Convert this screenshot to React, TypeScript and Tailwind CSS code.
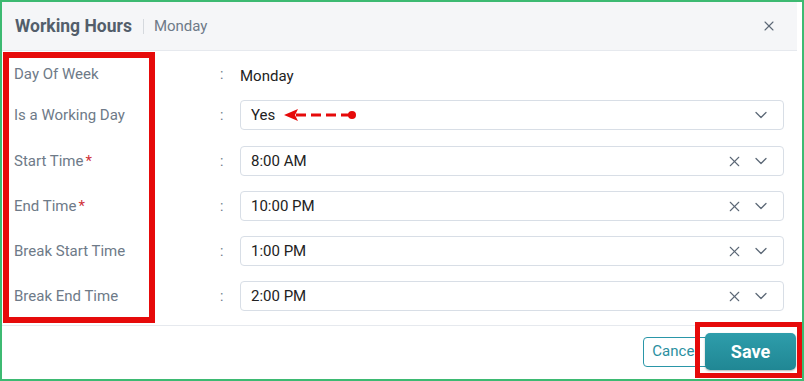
import React from "react";
import { X, ChevronDown } from "lucide-react";

// Rows of the working-hours form
const rows = [
  { label: "Start Time", value: "8:00 AM", required: true, clearable: true },
  { label: "End Time", value: "10:00 PM", required: true, clearable: true },
  { label: "Break Start Time", value: "1:00 PM", required: false, clearable: true },
  { label: "Break End Time", value: "2:00 PM", required: false, clearable: true },
];

const Label = ({ text, required }: { text: string; required?: boolean }) => (
  <div className="w-[218px] pl-[12px] text-[15px] text-[#6e7a88]">
    {text}
    {required && <span className="ml-[2px] text-[#d0333a]">*</span>}
  </div>
);

const Colon = () => <div className="w-[20px] text-[14px] text-[#6e7a88]">:</div>;

const SelectBox = ({
  value,
  clearable,
  children,
}: {
  value: string;
  clearable?: boolean;
  children?: React.ReactNode;
}) => (
  <div className="relative flex h-[30px] w-[544px] items-center rounded-[4px] border border-[#d8dee6] bg-white pl-[10px] pr-[12px]">
    <span className="text-[15px] text-[#222]">{value}</span>
    {children}
    <div className="ml-auto flex items-center gap-[8px] text-[#5c6876]">
      {clearable && <X size={17} strokeWidth={1.5} />}
      <ChevronDown size={20} strokeWidth={1.5} />
    </div>
  </div>
);

const DashedArrow = () => (
  <svg width="76" height="14" viewBox="0 0 76 14" className="absolute left-[43px] top-[7px]">
    <polygon points="0,7 14,1 11,7 14,13" fill="#e60a0a" />
    <line x1="12" y1="7" x2="66" y2="7" stroke="#e60a0a" strokeWidth="3" strokeDasharray="10 5" />
    <circle cx="68" cy="7" r="4" fill="#e60a0a" />
  </svg>
);

export default function App() {
  return (
    <div
      className="relative h-[381px] w-[804px] overflow-hidden border-2 border-[#3dba72] bg-white"
      style={{ fontFamily: "Roboto, 'Liberation Sans', sans-serif" }}
    >
      <div className="w-[795px]">
        {/* header */}
        <div className="flex h-[49px] items-center border-b border-[#e6e9ee] bg-[#f5f6f8] pl-[13px] pr-[20px]">
          <span className="text-[17.5px] font-bold text-[#535e6b]">Working Hours</span>
          <span className="ml-[11px] mr-[10px] h-[15px] w-px bg-[#d5d9de]" />
          <span className="text-[15px] text-[#6e7a88]">Monday</span>
          <X size={16} strokeWidth={1.6} className="ml-auto text-[#5c6876]" />
        </div>

        {/* body */}
        <div className="flex flex-col pt-[10px]">
          <div className="flex h-[27px] items-center">
            <Label text="Day Of Week" />
            <Colon />
            <span className="pt-[3px] text-[15px] text-[#222]">Monday</span>
          </div>
          <div className="mt-[12px] flex items-center">
            <Label text="Is a Working Day" />
            <Colon />
            <SelectBox value="Yes">
              <DashedArrow />
            </SelectBox>
          </div>
          {rows.map((r, i) => (
            <div key={r.label} className={`flex items-center ${i === 0 ? "mt-[16px]" : "mt-[15px]"}`}>
              <Label text={r.label} required={r.required} />
              <Colon />
              <SelectBox value={r.value} clearable={r.clearable} />
            </div>
          ))}
        </div>

        {/* footer */}
        <div className="mt-[14px] flex h-[52px] items-center justify-end border-t border-[#e6e9ee] pr-[1px]">
          <button className="h-[30px] rounded-[4px] border border-[#2a96a8] bg-white pl-[8px] pr-[12px] text-[15px] text-[#2a8fa0]">
            Cancel
          </button>
          <button className="-ml-[6px] h-[37px] w-[91px] rounded-[5px] bg-gradient-to-b from-[#2e9dab] to-[#208794] text-[18px] font-bold text-white shadow-[0_1px_2px_rgba(0,0,0,0.3)]">
            Save
          </button>
        </div>
      </div>

      {/* annotations */}
      <div className="absolute left-[1px] top-[50px] h-[271px] w-[152px] border-[6px] border-[#e60a0a]" />
      <div className="absolute left-[693px] top-[320px] h-[56px] w-[107px] border-[5px] border-[#e60a0a]" />
    </div>
  );
}
